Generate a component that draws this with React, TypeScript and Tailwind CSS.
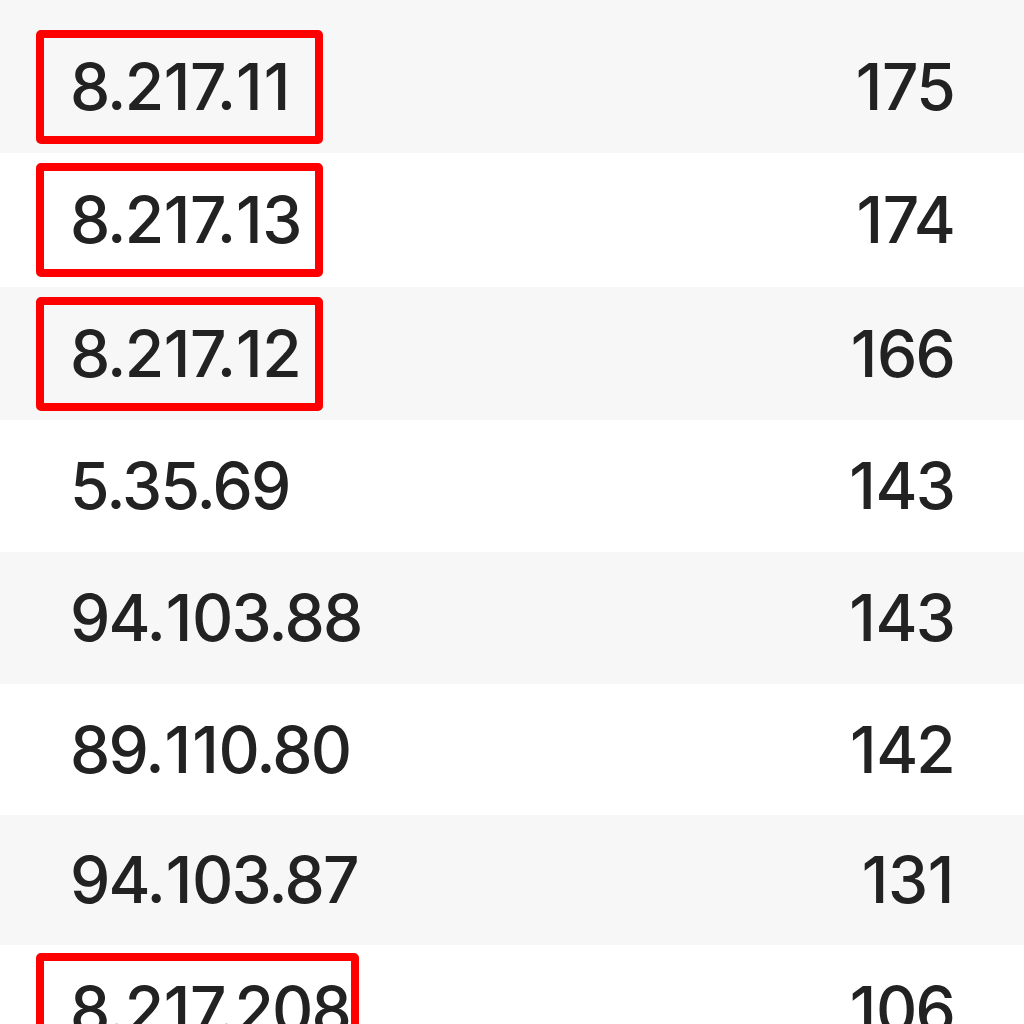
const rows = [
  { ip: "8.217.11", count: "175", box: "w-[287px]", h: "h-[153px] pt-[20px]", bg: "bg-[#f7f7f7]" },
  { ip: "8.217.13", count: "174", box: "w-[287px]", h: "h-[134px]", bg: "bg-white" },
  { ip: "8.217.12", count: "166", box: "w-[287px]", h: "h-[133px]", bg: "bg-[#f7f7f7]" },
  { ip: "5.35.69", count: "143", box: "", h: "h-[132px]", bg: "bg-white" },
  { ip: "94.103.88", count: "143", box: "", h: "h-[132px]", bg: "bg-[#f7f7f7]" },
  { ip: "89.110.80", count: "142", box: "", h: "h-[131px]", bg: "bg-white" },
  { ip: "94.103.87", count: "131", box: "", h: "h-[130px]", bg: "bg-[#f7f7f7]" },
  { ip: "8.217.208", count: "106", box: "w-[323px]", h: "h-[130px]", bg: "bg-white" },
];

// the "1" in the screenshot is a touch wider than Inter's, so give it some air
const Num = ({ value }: { value: string }) => (
  <span className="inline-flex">
    {value.split(/(1)/).filter(Boolean).map((part, i) =>
      part === "1" ? (
        <span key={i} className="px-[1.5px]">
          1
        </span>
      ) : (
        <span key={i}>{part}</span>
      )
    )}
  </span>
);

export default function App() {
  return (
    <div className="h-[1024px] w-[1024px] overflow-hidden bg-white font-['Inter',sans-serif] text-[64px] font-medium leading-none tracking-[-1.8px] text-[#222]">
      {rows.map((row) => (
        <div
          key={row.ip}
          className={`flex items-center justify-between pl-[36px] pr-[70px] ${row.h} ${row.bg}`}
        >
          {row.box ? (
            <span
              className={`flex h-[114px] shrink-0 items-center rounded-[5px] border-[8px] border-[#ff0000] pl-[26px] ${row.box}`}
            >
              <Num value={row.ip} />
            </span>
          ) : (
            <span className="pl-[34px]">
              <Num value={row.ip} />
            </span>
          )}
          <Num value={row.count} />
        </div>
      ))}
    </div>
  );
}
